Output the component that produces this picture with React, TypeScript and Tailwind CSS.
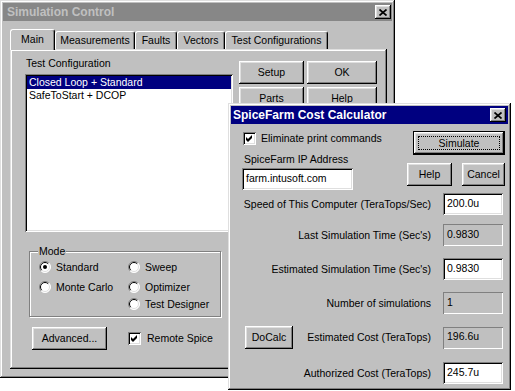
const raised = 'shadow-[inset_-1px_-1px_#000,inset_1px_1px_#dfdfdf,inset_-2px_-2px_#808080,inset_2px_2px_#fff]'
const bevel = 'shadow-[inset_-1px_-1px_#000,inset_1px_1px_#fff,inset_-2px_-2px_#808080,inset_2px_2px_#dfdfdf]'
const sunken = 'shadow-[inset_1px_1px_#808080,inset_-1px_-1px_#fff,inset_2px_2px_#000,inset_-2px_-2px_#dfdfdf]'
const thin = 'shadow-[inset_1px_1px_#808080,inset_-1px_-1px_#fff]'

const Btn = ({ children, className = '' }: { children: React.ReactNode; className?: string }) => (
  <div className={`${bevel} bg-[#c0c0c0] flex items-center justify-center text-black ${className}`}>{children}</div>
)

const CloseBtn = () => (
  <Btn className="w-[16px] h-[14px]">
    <svg width="8" height="7" viewBox="0 0 8 7">
      <path d="M0.5 0.5L7.5 6.5M7.5 0.5L0.5 6.5" stroke="#000" strokeWidth="1.7" />
    </svg>
  </Btn>
)

const Check = () => (
  <div className={`${sunken} bg-white w-[13px] h-[13px] shrink-0`}>
    <svg width="13" height="13" viewBox="0 0 13 13">
      <polygon points="3,5 5,7 9,3 9,6 5,10 3,8" fill="#000" />
    </svg>
  </div>
)

const Radio = ({ on }: { on?: boolean }) => (
  <svg width="12" height="12" viewBox="0 0 12 12" className="shrink-0">
    <circle cx="6" cy="6" r="5.5" fill="#fff" />
    <path d="M2.1 9.9A5.5 5.5 0 0 1 9.9 2.1" stroke="#808080" fill="none" />
    <path d="M9.9 2.1A5.5 5.5 0 0 1 2.1 9.9" stroke="#fff" fill="none" />
    <path d="M2.8 9.2A4.5 4.5 0 0 1 9.2 2.8" stroke="#000" fill="none" />
    <path d="M9.2 2.8A4.5 4.5 0 0 1 2.8 9.2" stroke="#dfdfdf" fill="none" />
    {on && <circle cx="6" cy="6" r="2" fill="#000" />}
  </svg>
)

const Tab = ({ label, w, sel }: { label: string; w: string; sel?: boolean }) => (
  <div
    className={`relative flex items-center justify-center bg-[#c0c0c0] border-t border-l border-white border-r border-r-black rounded-t-[3px] shadow-[inset_-1px_0_#808080] ${w} ${
      sel ? 'h-[21px] -mb-[1px] z-10 pb-[2px]' : 'h-[18px]'
    }`}
  >
    {label}
  </div>
)

const Field = ({ value, white }: { value: string; white?: boolean }) => (
  <div
    className={`w-[60px] h-[22px] flex items-center pl-[4px] pb-[2px] ${white ? `${sunken} bg-white` : `${thin} bg-[#c0c0c0]`}`}
  >
    {value}
  </div>
)

const Row = ({ label, children, mt }: { label: string; children: React.ReactNode; mt: string }) => (
  <div className={`flex items-center justify-end pr-[5px] ${mt}`}>
    <span className="mr-[12px]">{label}</span>
    {children}
  </div>
)

export default function App() {
  return (
    <div
      className="relative w-[515px] h-[391px] bg-white overflow-hidden text-[10.5px] leading-[13px] text-black"
      style={{ fontFamily: '"Liberation Sans", Arial, sans-serif' }}
    >
      {/* Simulation Control */}
      <div className={`${raised} bg-[#c0c0c0] w-[395px] h-[378px] p-[3px] flex flex-col`}>
        <div className="h-[18px] bg-[#878787] flex items-center justify-between pl-[4px] pr-[1px]">
          <span className="font-bold text-[12px] text-[#c0c0c0]">Simulation Control</span>
          <CloseBtn />
        </div>

        <div className="flex items-end h-[20px] mt-[8px] ml-[7px]">
          <Tab label="Main" w="w-[45px]" sel />
          <Tab label="Measurements" w="w-[80px]" />
          <Tab label="Faults" w="w-[42px]" />
          <Tab label="Vectors" w="w-[48px]" />
          <Tab label="Test Configurations" w="w-[103px]" />
        </div>

        <div className={`${raised} ml-[7px] w-[377px] h-[320px] flex`}>
          <div className="ml-[15px] w-[208px] flex flex-col">
            <div className="mt-[8px] ml-[1px]">Test Configuration</div>
            <div className={`${sunken} bg-white mt-[4px] h-[158px] p-[2px]`}>
              <div className="bg-[#000080] text-white h-[13px] pl-[2px] flex items-center">Closed Loop + Standard</div>
              <div className="h-[13px] pl-[2px] flex items-center">SafeToStart + DCOP</div>
            </div>

            <div className="relative mt-[19px] ml-[4px] w-[192px] h-[66px] border border-[#808080] shadow-[inset_1px_1px_#fff,1px_1px_#fff]">
              <span className="absolute -top-[7px] left-[8px] bg-[#c0c0c0] px-[1px]">Mode</span>
              <div className="grid grid-cols-[89px_1fr] pl-[9px] pt-[8px]">
                <div className="flex items-center gap-[5px] h-[14px]"><Radio on />Standard</div>
                <div className="flex items-center gap-[5px] h-[14px]"><Radio />Sweep</div>
                <div className="flex items-center gap-[5px] h-[14px] mt-[6px]"><Radio />Monte Carlo</div>
                <div className="flex items-center gap-[5px] h-[14px] mt-[6px]"><Radio />Optimizer</div>
                <div />
                <div className="flex items-center gap-[5px] h-[14px] mt-[3px]"><Radio />Test Designer</div>
              </div>
            </div>

            <div className="flex items-center mt-[10px] ml-[7px]">
              <Btn className="w-[75px] h-[23px]">Advanced...</Btn>
              <div className="ml-[21px]"><Check /></div>
              <span className="ml-[6px]">Remote Spice</span>
            </div>
          </div>

          <div className="ml-[6px] mt-[12px] grid grid-cols-[65px_70px] gap-[3px] self-start">
            <Btn className="h-[23px]">Setup</Btn>
            <Btn className="h-[23px]">OK</Btn>
            <Btn className="h-[23px]">Parts</Btn>
            <Btn className="h-[23px]">Help</Btn>
          </div>
        </div>
      </div>

      {/* SpiceFarm Cost Calculator */}
      <div className={`${raised} absolute left-[228px] top-[103px] w-[283px] h-[287px] bg-[#c0c0c0] p-[3px] flex flex-col`}>
        <div className="h-[18px] bg-[#000080] flex items-center justify-between pl-[2px] pr-[2px]">
          <span className="font-bold text-[12px] text-white">SpiceFarm Cost Calculator</span>
          <CloseBtn />
        </div>

        <div className="flex">
          <div className="pl-[12px] flex flex-col">
            <div className="flex items-center mt-[7px] h-[14px]">
              <Check />
              <span className="ml-[5px]">Eliminate print commands</span>
            </div>
            <div className="mt-[8px] h-[12px] leading-[12px] ml-[1px]">SpiceFarm IP Address</div>
            <div className={`${sunken} bg-white mt-[3px] -ml-[1px] w-[111px] h-[22px] flex items-center pl-[4px] pb-[1px]`}>
              farm.intusoft.com
            </div>
          </div>
          <div className="ml-auto pr-[3px] flex flex-col items-end">
            <div className="mt-[7px] w-[92px] h-[24px] border border-black">
              <Btn className="w-full h-full p-[4px]">
                <div className="w-full h-full border border-dotted border-black flex items-center justify-center">Simulate</div>
              </Btn>
            </div>
            <div className="flex mt-[8px] gap-[10px]">
              <Btn className="w-[45px] h-[23px]">Help</Btn>
              <Btn className="w-[43px] h-[23px]">Cancel</Btn>
            </div>
          </div>
        </div>

        <Row label="Speed of This Computer (TeraTops/Sec)" mt="mt-[3px]"><Field value="200.0u" white /></Row>
        <Row label="Last Simulation Time (Sec's)" mt="mt-[9px]"><Field value="0.9830" /></Row>
        <Row label="Estimated Simulation Time (Sec's)" mt="mt-[12px]"><Field value="0.9830" white /></Row>
        <Row label="Number of simulations" mt="mt-[12px]"><Field value="1" /></Row>
        <div className="flex items-center pr-[5px] mt-[12px]">
          <Btn className="ml-[14px] mr-auto w-[48px] h-[23px]">DoCalc</Btn>
          <span className="mr-[12px]">Estimated Cost (TeraTops)</span>
          <Field value="196.6u" />
        </div>
        <Row label="Authorized Cost (TeraTops)" mt="mt-[13px]"><Field value="245.7u" white /></Row>
      </div>
    </div>
  )
}
